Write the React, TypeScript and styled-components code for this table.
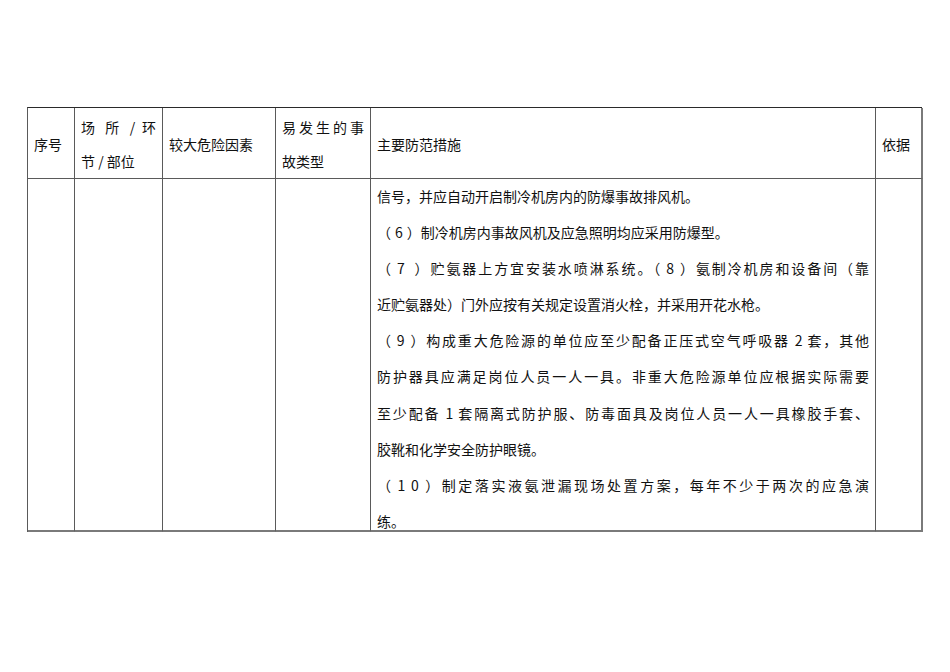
import styled, {createGlobalStyle} from 'styled-components';

const GlobalStyle = createGlobalStyle`
  html, body {
    margin: 0;
    padding: 0;
    background: #ffffff;
  }
  body {
    font-family: "Noto Sans CJK SC", "Liberation Serif", serif;
    color: #111111;
  }
`;

const Page = styled.div`
  width: 950px;
  height: 672px;
  box-sizing: border-box;
  padding: 107px 0 0 27px;
`;

const Table = styled.div`
  display: grid;
  grid-template-columns: 47px 88px 113px 95px 505px 47px;
  grid-template-rows: 71px 353px;
  width: 895px;
  box-sizing: border-box;
  border-top: 1px solid #2a2a2a;
  border-left: 1px solid #5a5a5a;
`;

const Cell = styled.div<{$last?: boolean; $bottom?: boolean}>`
  box-sizing: border-box;
  padding: 0 6px;
  border-right: ${(p) => (p.$last ? '2px solid #7a7a7a' : '1px solid #5a5a5a')};
  border-bottom: ${(p) => (p.$bottom ? '2px solid #7a7a7a' : '1px solid #5a5a5a')};
  font-size: 14px;
`;

const HeadCell = styled(Cell)`
  display: flex;
  flex-direction: column;
  justify-content: center;
  line-height: 34px;
  padding-top: 1px;
`;

const BodyCell = styled(Cell)`
  line-height: 36.1px;
  padding-top: 0;
  overflow: visible;
`;

const Lines = styled.div`
  margin-top: -1px;
`;

const Line = styled.div<{$full?: boolean}>`
  white-space: nowrap;
  text-align: ${(p) => (p.$full ? 'justify' : 'left')};
  text-align-last: ${(p) => (p.$full ? 'justify' : 'left')};
`;

const Num = styled.span`
  padding: 0 4px;
  letter-spacing: 4px;
  &:last-child {
    letter-spacing: 0;
  }
`;

const measures: {text: React.ReactNode; full?: boolean}[] = [
  {text: '信号，并应自动开启制冷机房内的防爆事故排风机。'},
  {text: <>（<Num>6</Num>）制冷机房内事故风机及应急照明均应采用防爆型。</>},
  {text: <>（<Num>7</Num>）贮氨器上方宜安装水喷淋系统。（<Num>8</Num>）氨制冷机房和设备间（靠</>, full: true},
  {text: '近贮氨器处）门外应按有关规定设置消火栓，并采用开花水枪。'},
  {text: <>（<Num>9</Num>）构成重大危险源的单位应至少配备正压式空气呼吸器 2 套，其他</>, full: true},
  {text: '防护器具应满足岗位人员一人一具。非重大危险源单位应根据实际需要', full: true},
  {text: '至少配备 1 套隔离式防护服、防毒面具及岗位人员一人一具橡胶手套、', full: true},
  {text: '胶靴和化学安全防护眼镜。'},
  {text: <>（<Num>1 0</Num>）制定落实液氨泄漏现场处置方案，每年不少于两次的应急演</>, full: true},
  {text: '练。'},
];

export default function App() {
  return (
    <>
      <GlobalStyle />
      <Page lang="zh-CN">
        <Table>
          <HeadCell>序号</HeadCell>
          <HeadCell>
            <Line $full>场 所 / 环</Line>
            <Line>节 / 部位</Line>
          </HeadCell>
          <HeadCell>较大危险因素</HeadCell>
          <HeadCell>
            <Line $full>易发生的事</Line>
            <Line>故类型</Line>
          </HeadCell>
          <HeadCell>主要防范措施</HeadCell>
          <HeadCell $last>依据</HeadCell>

          <BodyCell $bottom />
          <BodyCell $bottom />
          <BodyCell $bottom />
          <BodyCell $bottom />
          <BodyCell $bottom>
            <Lines>
              {measures.map((m, i) => (
                <Line key={i} $full={m.full}>{m.text}</Line>
              ))}
            </Lines>
          </BodyCell>
          <BodyCell $bottom $last />
        </Table>
      </Page>
    </>
  );
}
